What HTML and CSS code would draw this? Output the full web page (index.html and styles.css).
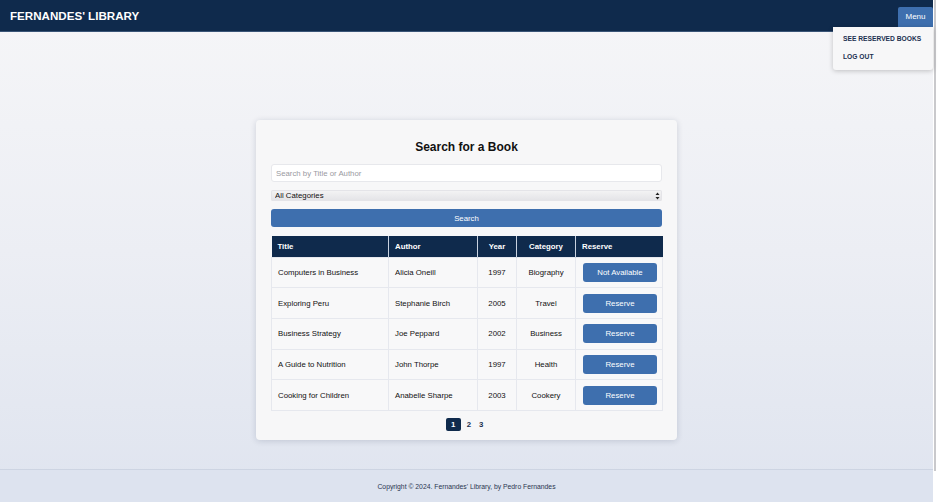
FILE: index.html
```html
<!DOCTYPE html>
<html lang="en">
<head>
<meta charset="utf-8">
<title>Fernandes' Library</title>
<link rel="stylesheet" href="styles.css">
</head>
<body>
<div class="window">
  <div class="page">
    <header class="topbar">
      <div class="brand">FERNANDES' LIBRARY</div>
      <button class="menu-btn">Menu</button>
      <div class="dropdown">
        <a class="dd-item">SEE RESERVED BOOKS</a>
        <a class="dd-item">LOG OUT</a>
      </div>
    </header>
    <main class="main">
      <section class="card">
        <h1 class="card-title">Search for a Book</h1>
        <input class="search-input" type="text" placeholder="Search by Title or Author">
        <div class="select-wrap">
          <select class="select"><option>All Categories</option></select>
          <svg class="select-arrows" width="5" height="8" viewBox="0 0 5 8"><path d="M2.5 0.5 L4.5 3 L0.5 3 Z M2.5 7.5 L4.5 5 L0.5 5 Z" fill="#222"/></svg>
        </div>
        <button class="search-btn">Search</button>
        <table class="books">
          <thead>
            <tr><th class="c-title">Title</th><th class="c-author">Author</th><th class="c-year">Year</th><th class="c-cat">Category</th><th class="c-res">Reserve</th></tr>
          </thead>
          <tbody>
            <tr><td>Computers in Business</td><td>Alicia Oneill</td><td class="center">1997</td><td class="center">Biography</td><td class="res"><button class="res-btn">Not Available</button></td></tr>
            <tr><td>Exploring Peru</td><td>Stephanie Birch</td><td class="center">2005</td><td class="center">Travel</td><td class="res"><button class="res-btn">Reserve</button></td></tr>
            <tr><td>Business Strategy</td><td>Joe Peppard</td><td class="center">2002</td><td class="center">Business</td><td class="res"><button class="res-btn">Reserve</button></td></tr>
            <tr><td>A Guide to Nutrition</td><td>John Thorpe</td><td class="center">1997</td><td class="center">Health</td><td class="res"><button class="res-btn">Reserve</button></td></tr>
            <tr><td>Cooking for Children</td><td>Anabelle Sharpe</td><td class="center">2003</td><td class="center">Cookery</td><td class="res"><button class="res-btn">Reserve</button></td></tr>
          </tbody>
        </table>
        <nav class="pager">
          <span class="pg active">1</span>
          <span class="pg">2</span>
          <span class="pg">3</span>
        </nav>
      </section>
    </main>
    <footer class="footer">Copyright © 2024. Fernandes' Library, by Pedro Fernandes</footer>
  </div>
  <div class="scrollbar"><div class="thumb"></div></div>
</div>
</body>
</html>
```
FILE: styles.css
```css
* { box-sizing: border-box; }
html, body { margin: 0; padding: 0; }
body {
  font-family: "Liberation Sans", Arial, sans-serif;
  width: 940px;
  height: 502px;
  overflow: hidden;
  background: #fff;
}
.window {
  display: flex;
  height: 502px;
}
.page {
  width: 933px;
  display: flex;
  flex-direction: column;
  background: linear-gradient(to bottom, #f6f6f8 0%, #eceef4 50%, #dfe4ef 100%);
}
.scrollbar {
  width: 7px;
  background: #fff;
}
.thumb {
  width: 2px;
  height: 471px;
  margin-left: 1px;
  background: #c9c9cc;
}
.topbar {
  position: relative;
  height: 32px;
  flex: none;
  background: #0f2a4c;
  border-bottom: 1px solid #3a5577;
  display: flex;
  align-items: center;
  justify-content: space-between;
  padding: 0 0 0 10px;
}
.brand {
  color: #fff;
  font-weight: bold;
  font-size: 11.6px;
  margin-top: -1px;
}
.menu-btn {
  align-self: flex-start;
  margin-top: 7px;
  width: 35px;
  height: 20px;
  border: none;
  border-radius: 2px 2px 0 0;
  background: #3e6fae;
  color: #fff;
  font-family: inherit;
  font-size: 8px;
  padding: 0;
  line-height: 20px;
}
.dropdown {
  position: absolute;
  top: 27px;
  right: 0;
  width: 100px;
  height: 43px;
  background: #f7f7f8;
  border-radius: 0 0 3px 3px;
  box-shadow: 0 1px 5px rgba(0,0,0,0.22);
  display: flex;
  flex-direction: column;
  padding: 7px 0 0 10px;
  gap: 9px;
  z-index: 2;
}
.dd-item {
  color: #1a2f4f;
  font-weight: bold;
  font-size: 6.7px;
  line-height: 9px;
}
.main {
  flex: 1;
  display: flex;
  justify-content: center;
  align-items: flex-start;
  padding-top: 88px;
}
.card {
  width: 421px;
  height: 320px;
  background: #f7f7f8;
  border-radius: 4px;
  box-shadow: 0 1px 6px rgba(20,30,60,0.16);
  padding: 20px 15px 8px 15px;
  display: flex;
  flex-direction: column;
}
.card-title {
  margin: 0;
  font-size: 12px;
  line-height: 14px;
  text-align: center;
  color: #111;
  font-weight: bold;
}
.search-input {
  margin-top: 10px;
  width: 391px;
  height: 18px;
  flex: none;
  border: 1px solid #e7e8ec;
  border-radius: 3px;
  background: #fff;
  font-family: inherit;
  font-size: 7.8px;
  padding: 0 4px;
  outline: none;
}
.search-input::placeholder { color: #9a9a9f; }
.select-wrap {
  margin-top: 8px;
  display: grid;
  align-items: center;
}
.select {
  grid-area: 1 / 1;
  -webkit-appearance: none;
  appearance: none;
  width: 391px;
  height: 11px;
  border: none;
  border-radius: 2px;
  background: linear-gradient(to bottom, #f4f4f5, #e3e3e6);
  box-shadow: inset 0 0 0 1px #e4e4e8;
  font-family: inherit;
  font-size: 7.8px;
  line-height: 11px;
  color: #111;
  padding: 0 4px;
  margin: 0;
}
.select-arrows {
  grid-area: 1 / 1;
  justify-self: end;
  margin-right: 2px;
}
.search-btn {
  margin-top: 8px;
  width: 391px;
  height: 18px;
  flex: none;
  border: none;
  border-radius: 3px;
  background: #3e6fae;
  color: #fff;
  font-family: inherit;
  font-size: 7.8px;
  padding: 0;
}
.books {
  margin-top: 9px;
  width: 391px;
  border-collapse: collapse;
  table-layout: fixed;
  font-size: 7.8px;
  color: #111;
}
.books th {
  background: #0f2a4c;
  color: #fff;
  font-weight: bold;
  text-align: left;
  height: 21px;
  padding: 0 6px;
  border-left: 1px solid #c9d2e0;
}
.books th:first-child { border-left: none; }
.books th.c-year, .books th.c-cat { text-align: center; }
.c-title { width: 117px; }
.c-author { width: 89px; }
.c-year { width: 39px; }
.c-cat { width: 59px; }
.c-res { width: 87px; }
.books td {
  height: 30.7px;
  padding: 0 6px;
  border: 1px solid #e6e8ee;
  background: #f8f8f9;
  color: #111;
}
.books td.center { text-align: center; }
.books td.res { padding: 0 6px 0 7px; }
.res-btn {
  width: 74px;
  height: 19px;
  border: none;
  border-radius: 3px;
  background: #3e6fae;
  color: #fff;
  font-family: inherit;
  font-size: 7.8px;
  padding: 0;
  display: block;
}
.pager {
  margin-top: 7px;
  display: flex;
  justify-content: center;
  font-size: 7.8px;
  font-weight: bold;
  color: #1a2f4f;
}
.pg {
  height: 13px;
  line-height: 13px;
  padding: 0 4px;
  text-align: center;
}
.pg.active {
  width: 15px;
  background: #0f2a4c;
  color: #fff;
  border-radius: 2px;
  margin-right: 2px;
}
.footer {
  height: 33px;
  flex: none;
  background: #dde3ef;
  border-top: 1px solid #cdd4e2;
  text-align: center;
  font-size: 6.8px;
  color: #2a3550;
  line-height: 33px;
}
```
